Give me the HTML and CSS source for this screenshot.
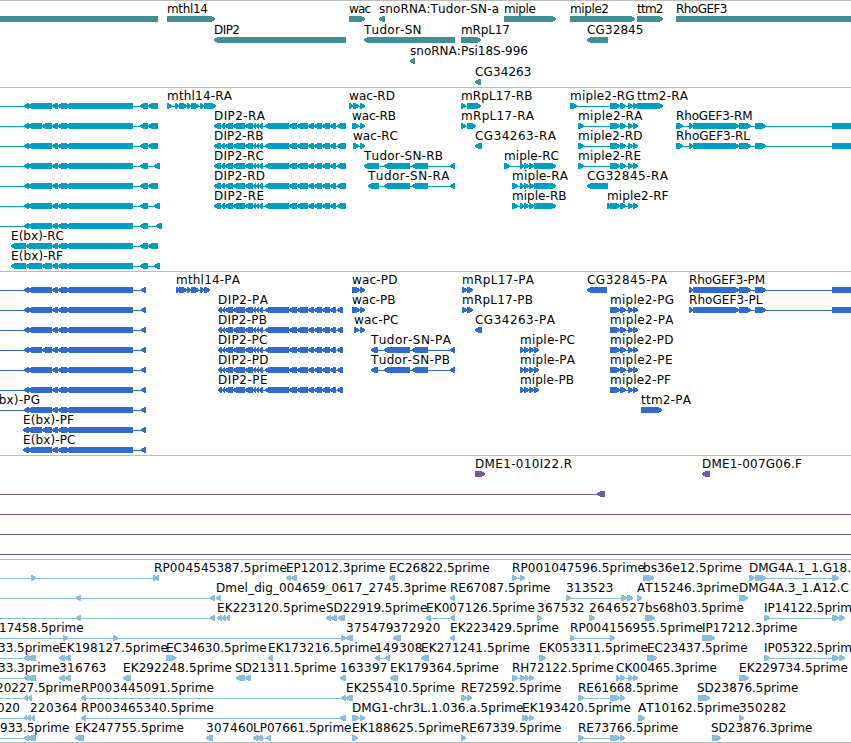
FILE: index.html
```
<!DOCTYPE html>
<html>
<head>
	<meta charset="utf-8">
	<title>Genome Browser</title>
	<link rel="stylesheet" href="styles.css">
</head>
<body>
	<!-- one svg per track, filled in by tracks.js -->
	<div id="tracks">
		<div class="track gene"><svg id="gene"></svg></div>
		<div class="track transcript"><svg id="transcript"></svg></div>
		<div class="track protein"><svg id="protein"></svg></div>
		<div class="track bac"><svg id="bac"></svg></div>
		<div class="track est"><svg id="est"></svg></div>
	</div>
	<script src="tracks.js"></script>
</body>
</html>
```
FILE: styles.css
```
body{
	margin: 0;
	background-color: #fff;
	font-family: "DejaVu Sans", sans-serif;
	font-size: 12px;
	overflow: hidden;
}
#tracks{
	display: flex;
	flex-direction: column;
	border-bottom: 1px solid #bbb;
}
.track{
	box-sizing: border-box;
	border-top: 1px solid #bbb;
	overflow: hidden;
}
.track svg{
	display: block;
	width: 100%;
	height: 100%;
}
.track text{
	fill: #000;
	font-kerning: none;
}
.track path{
	shape-rendering: crispEdges;
}
.gene{
	height: 87px;
	fill: #3f8f94;
}
.transcript{
	height: 184px;
	fill: #009fc0;
}
.protein{
	height: 184px;
	fill: #306bcd;
}
.bac{
	height: 104px;
	fill: #7459a8;
}
.est{
	height: 183px;
	fill: #8abcde;
}
```
FILE: tracks.js
```
//shared exon runs
let ebxMid = "52,58 58,67 66,133 ";
let ebx = "-20,-15 24,29 28,52 " + ebxMid;
let ebxSplit = "-20,-15 24,29 28,42 42,52 " + ebxMid;
let dip = "225,233 233,245 245,253 253,256 256,259 259,263 265,289 289,297 297,308 308,314 314,322 322,330 330,336 ";
let tudor = " 384,410 412,428 450,455";
let miple = "520,524 524,529 529,534 ";
let miple2 = "610,620 620,626 628,633 633,638";
let rho = "689,693 693,739 739,751 755,766 832,870";

//every feature is: row, label, label x, direction, exons, label width (optional)
let gene = [
	[0, "", 0, "L", "-20,158"],
	[0, "mthl14", 167, "R", "167,215", 41],
	[0, "wac", 349, "R", "349,365", 22],
	[0, "snoRNA:Tudor-SN-a", 379, "L", "379,385", 120],
	[0, "miple", 504, "R", "504,556", 32],
	[0, "miple2", 570, "R", "570,635", 39],
	[0, "ttm2", 637, "R", "637,663", 26.5],
	[0, "RhoGEF3", 676, "R", "676,870", 51.5],
	[1, "DIP2", 214, "L", "214,346", 26],
	[1, "Tudor-SN", 364, "L", "364,455", 57.5],
	[1, "mRpL17", 461, "R", "461,481", 49],
	[1, "CG32845", 587, "L", "587,608", 56.5],
	[2, "snoRNA:Psi18S-996", 410, "L", "410,415", 118],
	[3, "CG34263", 475, "L", "475,481", 56.5]
];

let transcript = [
	[0, "", 0, "L", ebx + "140,148 148,158"],
	[1, "", 0, "L", ebxSplit + "140,148 148,158"],
	[2, "", 0, "L", ebx + "140,148 148,158"],
	[3, "", 0, "L", ebx + "140,148 154,160"],
	[4, "", 0, "L", ebx + "140,148 148,158"],
	[5, "", 0, "L", ebx + "140,148 154,160"],
	[6, "", 0, "L", ebx + "140,148 156,162"],
	[7, "E(bx)-RC", 11, "L", "11,26 26,52 " + ebxMid + "140,148 148,158", 53],
	[8, "E(bx)-RF", 11, "L", "11,26 26,42 42,52 " + ebxMid + "140,148 154,160", 52],
	[0, "mthl14-RA", 167, "R", "167,172 175,179 179,187 187,191 191,199 200,204 204,216", 65],
	[1, "DIP2-RA", 214, "L", "214,221 221,225 " + dip + "337,346", 51],
	[2, "DIP2-RB", 214, "L", "214,221 221,225 " + dip + "337,346", 49.5],
	[3, "DIP2-RC", 214, "L", "214,221 221,225 " + dip + "337,346", 50],
	[4, "DIP2-RD", 214, "L", "214,221 221,225 " + dip + "337,346", 51],
	[5, "DIP2-RE", 214, "L", "214,221 221,225 " + dip + "337,346", 50],
	[0, "wac-RD", 349, "R", "349,353 353,359 360,365", 46],
	[1, "wac-RB", 352, "R", "352,359 360,365", 44],
	[2, "wac-RC", 353, "R", "353,359 360,365", 45],
	[3, "Tudor-SN-RB", 364, "L", "364,379" + tudor, 79],
	[4, "Tudor-SN-RA", 368, "L", "368,379" + tudor, 81.5],
	[0, "mRpL17-RB", 461, "R", "461,466 467,481", 71.5],
	[1, "mRpL17-RA", 461, "R", "461,466 467,476", 73],
	[2, "CG34263-RA", 475, "L", "475,482", 81],
	[3, "miple-RC", 504, "R", "504,510 " + miple + "534,556", 55],
	[4, "miple-RA", 512, "R", "512,518 " + miple + "534,556", 56],
	[5, "miple-RB", 512, "R", "512,518 " + miple + "534,556", 54.5],
	[0, "miple2-RG", 570, "R", "570,577 " + miple2, 64.5],
	[1, "miple2-RA", 578, "R", "578,584 " + miple2, 64.5],
	[2, "miple2-RD", 578, "R", "578,584 " + miple2, 64.5],
	[3, "miple2-RE", 578, "R", "578,584 " + miple2, 63],
	[4, "CG32845-RA", 587, "L", "587,608", 81],
	[5, "miple2-RF", 607, "R", "607,611 " + miple2, 61.5],
	[0, "ttm2-RA", 637, "R", "637,663", 51],
	[1, "RhoGEF3-RM", 676, "R", "676,683 " + rho, 76.5],
	[2, "RhoGEF3-RL", 676, "R", "676,683 " + rho, 74]
];

let protein = [
	[0, "", 0, "L", ebx + "141,146"],
	[1, "", 0, "L", ebx + "141,146"],
	[2, "", 0, "L", ebx + "141,146"],
	[3, "", 0, "L", ebxSplit + "141,146"],
	[4, "", 0, "L", ebx + "141,146"],
	[5, "", 0, "L", ebx + "141,146"],
	[6, "E(bx)-PG", -14, "L", ebx + "141,146", 54],
	[7, "E(bx)-PF", 23, "L", "23,29 28,42 42,52 " + ebxMid + "141,146", 51],
	[8, "E(bx)-PC", 23, "L", "23,29 28,52 " + ebxMid + "141,146", 52.5],
	[0, "mthl14-PA", 176, "R", "176,179 179,187 187,191 191,199 200,204 204,210", 64],
	[1, "DIP2-PA", 218, "L", "218,222 222,225 " + dip + "337,343", 50],
	[2, "DIP2-PB", 218, "L", "218,222 222,225 " + dip + "337,343", 49],
	[3, "DIP2-PC", 218, "L", "218,222 222,225 " + dip + "337,343", 49.5],
	[4, "DIP2-PD", 218, "L", "218,222 222,225 " + dip + "337,343", 50.5],
	[5, "DIP2-PE", 218, "L", "218,222 222,225 " + dip + "337,343", 49.5],
	[0, "wac-PD", 352, "R", "352,360 360,365", 45.5],
	[1, "wac-PB", 352, "R", "352,360 360,365", 43.5],
	[2, "wac-PC", 354, "R", "354,359 360,365", 44.5],
	[3, "Tudor-SN-PA", 371, "L", "371,378" + tudor, 80],
	[4, "Tudor-SN-PB", 371, "L", "371,378" + tudor, 79],
	[0, "mRpL17-PA", 462, "R", "462,467 467,473", 72],
	[1, "mRpL17-PB", 462, "R", "462,467 467,473", 71],
	[2, "CG34263-PA", 475, "L", "475,482", 80],
	[3, "miple-PC", 520, "R", miple + "534,539", 55],
	[4, "miple-PA", 520, "R", miple + "534,539", 55],
	[5, "miple-PB", 520, "R", miple + "534,539", 54],
	[0, "CG32845-PA", 587, "L", "587,607", 80],
	[1, "miple2-PG", 610, "R", miple2, 64],
	[2, "miple2-PA", 610, "R", miple2, 63.5],
	[3, "miple2-PD", 610, "R", miple2, 63.5],
	[4, "miple2-PE", 610, "R", miple2, 62.5],
	[5, "miple2-PF", 610, "R", miple2, 61],
	[6, "ttm2-PA", 641, "R", "641,662", 50],
	[0, "RhoGEF3-PM", 689, "R", rho, 76],
	[1, "RhoGEF3-PL", 689, "R", rho, 73.5]
];

let bac = [
	[0, "DME1-010I22.R", 475, "R", "475,485", 97],
	[0, "DME1-007G06.F", 702, "L", "702,710", 100],
	[1, "", 0, "L", "-20,-15 597,605"],
	[2, "", 0, "R", "-20,-15 870,880"],
	[3, "", 0, "R", "-20,-15 870,880"],
	[4, "", 0, "R", "-20,-15 870,880"]
];

let est = [
	[0, "", 0, "R", "-20,-15 31,36 153,157"],
	[0, "RP004545387.5prime", 154, "L", "154,159", 133],
	[0, "EP12012.3prime", 286, "L", "286,291 291,297"],
	[0, "EC26822.5prime", 389, "L", "389,395"],
	[0, "RP001047596.5prime", 512, "R", "512,517 520,525", 133],
	[0, "bs36e12.5prime", 643, "R", "643,654", 99],
	[0, "DMG4A.1_1.G18.", 749, "R", "749,755 755,766 832,839"],
	[1, "", 0, "L", "-20,-15 76,81 210,215"],
	[1, "Dmel_dig_004659_0617_2745.3prime", 216, "L", "216,221", 230.5],
	[1, "RE67087.5prime", 450, "L", "450,455"],
	[1, "313523", 566, "R", "566,571 621,627 627,633", 47.5],
	[1, "AT15246.3prime", 637, "R", "637,642", 102],
	[1, "DMG4A.3_1.A12.C", 739, "R", "739,748", 110],
	[2, "", 0, "L", "-20,-15 76,81 210,215"],
	[2, "EK223120.5prime", 217, "L", "217,222 222,226 226,230", 109],
	[2, "SD22919.5prime", 326, "L", "326,331 331,337 338,345"],
	[2, "EK007126.5prime", 426, "L", "426,431 450,455", 109],
	[2, "367532", 537, "R", "537,542", 47.5],
	[2, "2646527", 589, "R", "589,595", 56],
	[2, "bs68h03.5prime", 645, "R", "645,655", 99],
	[2, "IP14122.5prime", 764, "R", "764,770 832,839 839,845"],
	[3, "17458.5prime", -1, "R", "-20,-15 63,68 113,118 341,346"],
	[3, "375479", 346, "L", "346,353", 47.5],
	[3, "372920", 393, "L", "393,401", 47.5],
	[3, "EK223429.5prime", 450, "L", "450,455", 109],
	[3, "RP004156955.5prime", 570, "R", "570,575 610,615", 133],
	[3, "IP17212.3prime", 702, "R", "702,715"],
	[4, "33.5prime", -2, "L", "-20,-15 24,29 28,36"],
	[4, "EK198127.5prime", 59, "L", "59,65 65,71", 109],
	[4, "EC34630.5prime", 166, "R", "166,176"],
	[4, "EK173216.5prime", 268, "L", "268,273", 109],
	[4, "149308", 375, "L", "375,380 385,390", 47.5],
	[4, "EK271241.5prime", 421, "L", "421,429", 109],
	[4, "EK053311.5prime", 539, "R", "539,546", 109],
	[4, "EC23437.5prime", 647, "R", "647,657"],
	[4, "IP05322.5prime", 764, "R", "764,770 832,839 839,845"],
	[5, "33.3prime", -2, "L", "-20,-15 24,29 28,36"],
	[5, "316763", 59, "L", "59,65 65,71", 47.5],
	[5, "EK292248.5prime", 123, "L", "123,131", 109],
	[5, "SD21311.5prime", 235, "L", "236,245 245,251"],
	[5, "163397", 340, "L", "340,346", 47.5],
	[5, "EK179364.5prime", 390, "L", "390,398", 109],
	[5, "RH72122.5prime", 512, "R", "512,518 520,525 525,529 529,534"],
	[5, "CK00465.3prime", 616, "R", "616,620 620,625 628,633 633,638"],
	[5, "EK229734.5prime", 739, "R", "739,749", 109],
	[6, "20227.5prime", -4, "L", "-20,-15 24,28 28,32"],
	[6, "RP003445091.5prime", 81, "L", "81,86 341,346", 133],
	[6, "EK255410.5prime", 346, "L", "346,353", 109],
	[6, "RE72592.5prime", 461, "R", "461,467 467,472"],
	[6, "RE61668.5prime", 578, "R", "578,584 610,620 620,625"],
	[6, "SD23876.5prime", 697, "R", "698,710"],
	[7, "020", -3, "L", "-20,-15 24,27 27,31 31,35"],
	[7, "220364", 30, "L", "", 47.5],
	[7, "RP003465340.5prime", 81, "L", "81,86 340,346", 133],
	[7, "DMG1-chr3L.1.036.a.5prime", 352, "R", "352,359 360,365", 171.5],
	[7, "EK193420.5prime", 522, "R", "522,526 525,529 529,534", 109],
	[7, "AT10162.5prime", 638, "R", "638,645", 102],
	[7, "350282", 739, "R", "739,744", 47.5],
	[8, "933.5prime", 0, "L", "-20,-15 24,29 28,36"],
	[8, "EK247755.5prime", 75, "L", "75,84", 109],
	[8, "307460", 206, "L", "206,213", 47.5],
	[8, "LP07661.5prime", 253, "L", "253,258 257,263 266,271"],
	[8, "EK188625.5prime", 352, "R", "352,358", 109],
	[8, "RE67339.5prime", 461, "R", "461,466"],
	[8, "RE73766.5prime", 578, "R", "578,584 610,620 620,625"],
	[8, "SD23876.3prime", 711, "R", "712,721"]
];

//block with a blunt arrow head of up to 5px on one end
function exonPath(a, b, top, dir){
	let head = Math.min(5, b - a);
	if (dir == "L"){
		return `M${b} ${top}H${a + head - 1}L${a} ${top + 2}V${top + 4}L${a + head - 1} ${top + 6}H${b}z`;
	}
	return `M${a} ${top}H${b - head + 1}L${b} ${top + 2}V${top + 4}L${b - head + 1} ${top + 6}H${a}z`;
}

function drawTrack(id, features, pitch){
	let out = "";
	for (let i = 0; i < features.length; i++){
		let [row, label, x, dir, exons, width] = features[i];
		let top = 15 + row * pitch;
		if (exons){
			let list = exons.trim().split(" ").map(e => e.split(",").map(Number));
			//thin line joining the exons
			out += `<path d="M${list[0][0]} ${top + 3}H${list[list.length - 1][1]}v1H${list[0][0]}z"/>`;
			for (let j = 0; j < list.length; j++){
				out += `<path d="${exonPath(list[j][0], list[j][1], top, dir)}"/>`;
			}
		}
		if (label){
			let len = width ? ` textLength="${width}"` : "";
			out += `<text x="${x}" y="${top - 3}"${len}>${label}</text>`;
		}
	}
	document.getElementById(id).innerHTML = out;
}

drawTrack("gene", gene, 21);
drawTrack("transcript", transcript, 20);
drawTrack("protein", protein, 20);
drawTrack("bac", bac, 20);
drawTrack("est", est, 20);
```
